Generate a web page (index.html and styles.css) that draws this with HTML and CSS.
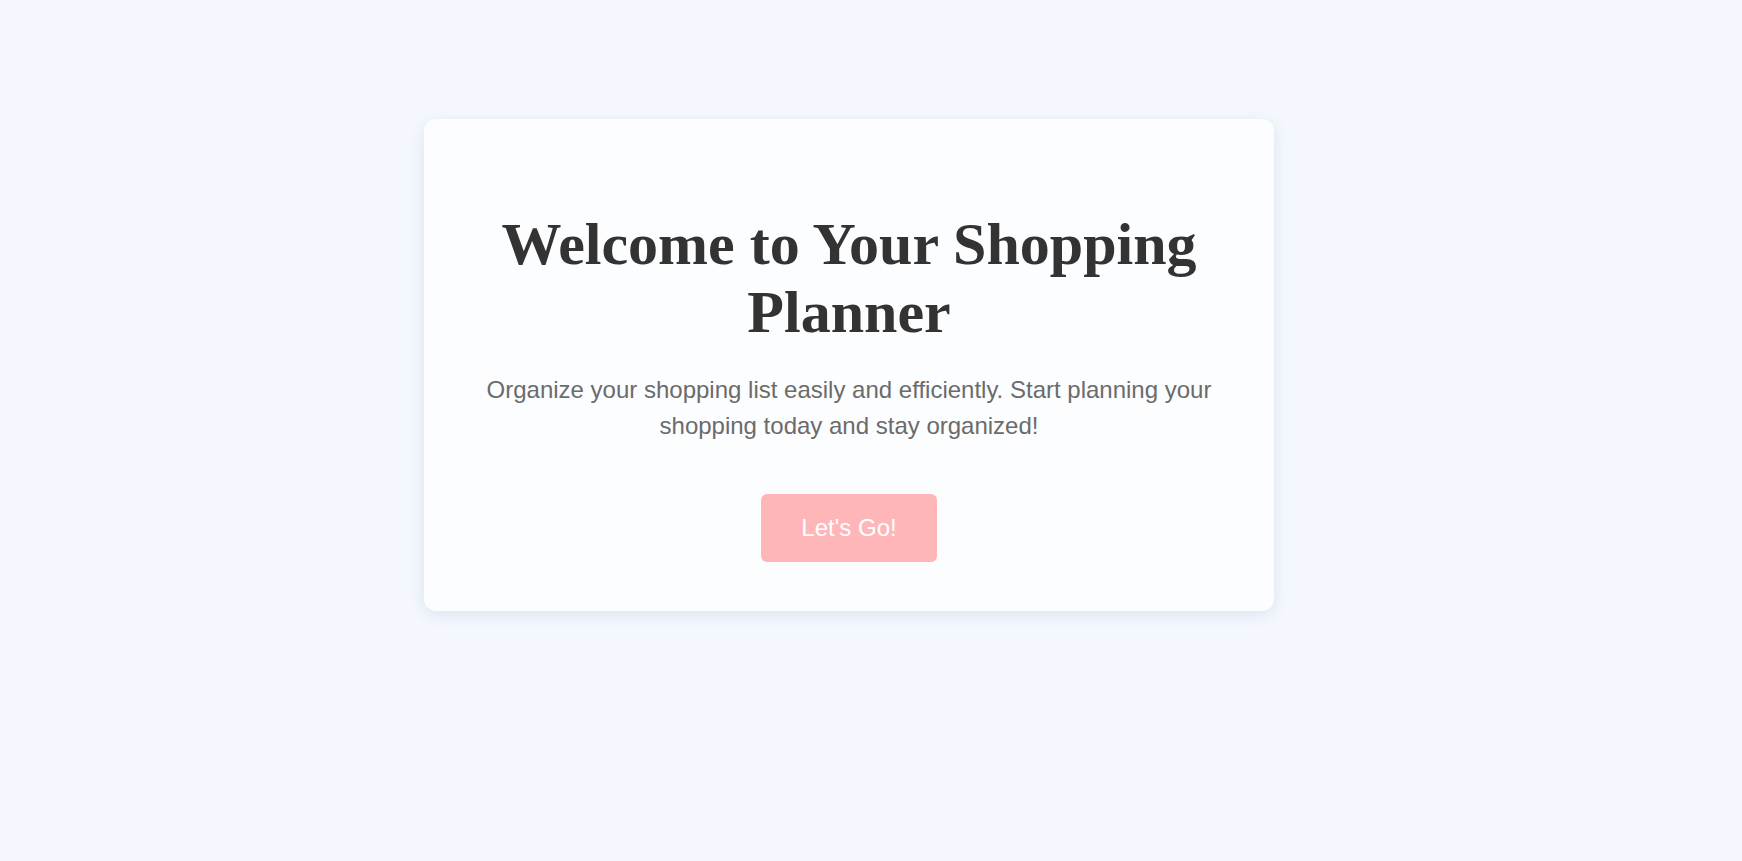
FILE: index.html
```html
<!DOCTYPE html>
<html lang="en">
<head>
<meta charset="utf-8">
<title>Shopping Planner</title>
<link rel="stylesheet" href="styles.css">
</head>
<body>
<main class="page">
  <section class="card">
    <h1 class="title">Welcome to Your Shopping Planner</h1>
    <p class="lead">Organize your shopping list easily and efficiently. Start planning your shopping today and stay organized!</p>
    <button class="cta" type="button">Let's Go!</button>
  </section>
</main>
</body>
</html>
```

FILE: styles.css
```css
html, body {
  margin: 0;
  padding: 0;
}

body {
  background: #f4f8fe;
  font-family: "Liberation Sans", Arial, sans-serif;
  min-height: 861px;
}

.page {
  padding: 119px 0 0 424px;
}

.card {
  box-sizing: border-box;
  width: 850px;
  height: 492px;
  padding: 50px 40px;
  background: #fcfdff;
  border-radius: 12px;
  box-shadow: 0 4px 16px rgba(30, 50, 90, 0.1);
  text-align: center;
}

.title {
  margin: 41px 0 26px;
  font-family: "Liberation Serif", "Times New Roman", serif;
  font-size: 60px;
  font-weight: bold;
  line-height: 68px;
  color: #333333;
}

.lead {
  margin: 0 0 50px;
  font-size: 24px;
  line-height: 36px;
  color: #6b6b6b;
}

.cta {
  padding: 20px 40px;
  border: none;
  border-radius: 6px;
  background: #ffb6b9;
  color: #ffffff;
  font-family: "Liberation Sans", Arial, sans-serif;
  font-size: 24px;
  cursor: pointer;
}
```
